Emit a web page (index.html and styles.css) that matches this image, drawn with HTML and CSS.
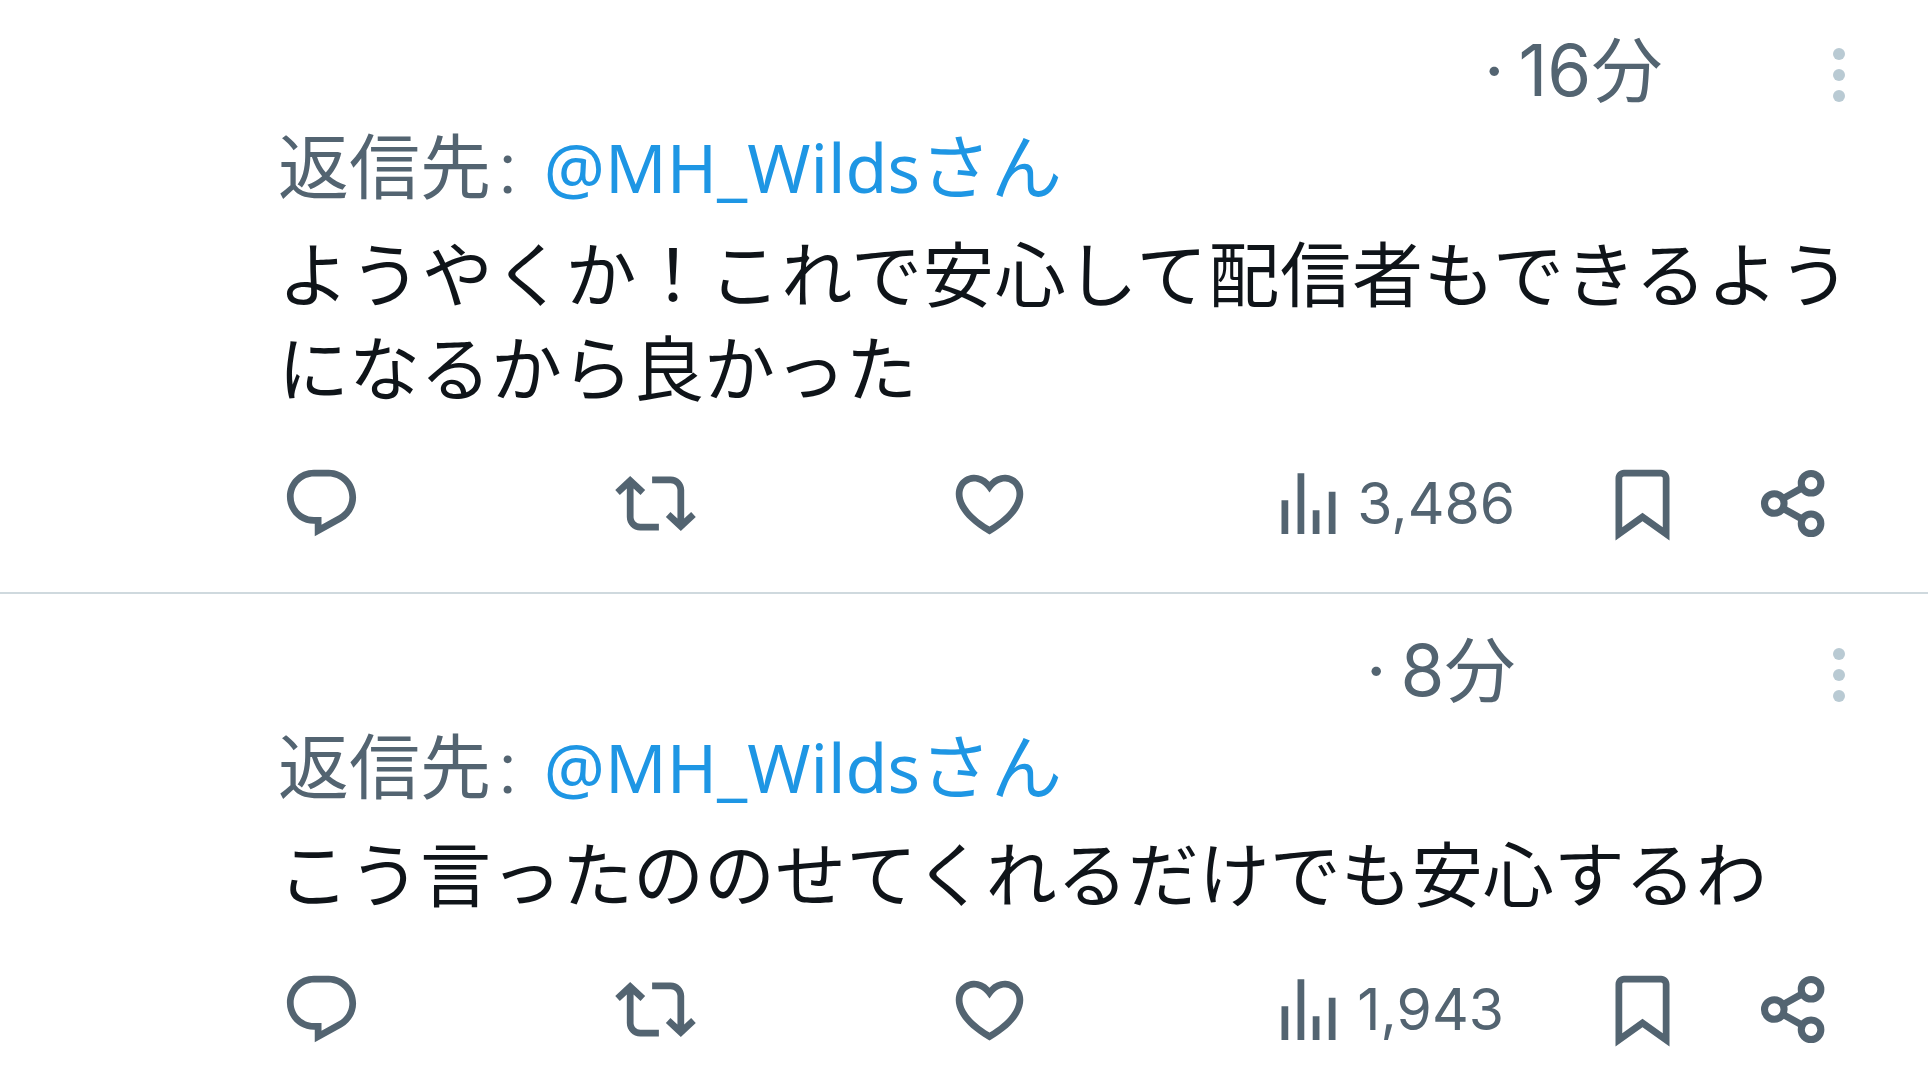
FILE: index.html
```html
<!DOCTYPE html>
<html lang="ja">
<head>
<meta charset="utf-8">
<meta name="viewport" content="width=device-width, initial-scale=1">
<title>返信</title>
<link rel="stylesheet" href="styles.css">
</head>
<body>
<svg class="sprite" aria-hidden="true">
  <symbol id="reply" viewBox="0 0 24 24"><path d="M1.751 10c0-4.42 3.584-8 8.005-8h4.366c4.49 0 8.129 3.64 8.129 8.13 0 2.96-1.607 5.68-4.196 7.11l-8.054 4.46v-3.69h-.067c-4.49.1-8.183-3.51-8.183-8.01zm8.005-6c-3.317 0-6.005 2.69-6.005 6 0 3.37 2.77 6.08 6.138 6.01l.351-.01h1.761v2.3l5.087-2.81c1.951-1.08 3.163-3.13 3.163-5.36 0-3.39-2.744-6.13-6.129-6.13H9.756z"/></symbol>
  <symbol id="repost" viewBox="0 0 24 24"><path d="M4.5 3.88l4.432 4.14-1.364 1.46L5.5 7.55V16c0 1.1.896 2 2 2H13v2H7.5c-2.209 0-4-1.79-4-4V7.55L1.432 9.48.068 8.02 4.5 3.88zM16.5 6H11V4h5.5c2.209 0 4 1.79 4 4v8.45l2.068-1.93 1.364 1.46-4.432 4.14-4.432-4.14 1.364-1.46 2.068 1.93V8c0-1.1-.896-2-2-2z"/></symbol>
  <symbol id="like" viewBox="0 0 24 24"><path d="M16.697 5.5c-1.222-.06-2.679.51-3.89 2.16l-.805 1.09-.806-1.09C9.984 6.01 8.526 5.44 7.304 5.5c-1.243.07-2.349.78-2.91 1.91-.552 1.12-.633 2.78.479 4.82 1.074 1.97 3.257 4.27 7.129 6.61 3.87-2.34 6.052-4.64 7.126-6.61 1.111-2.04 1.03-3.7.477-4.82-.561-1.13-1.666-1.84-2.908-1.91zm4.187 7.69c-1.351 2.48-4.001 5.12-8.379 7.67l-.503.3-.504-.3c-4.379-2.55-7.029-5.19-8.382-7.67-1.36-2.5-1.41-4.86-.514-6.67.887-1.79 2.647-2.91 4.601-3.01 1.651-.09 3.368.56 4.798 2.01 1.429-1.45 3.146-2.1 4.796-2.01 1.954.1 3.714 1.22 4.601 3.01.896 1.81.846 4.17-.514 6.67z"/></symbol>
  <symbol id="views" viewBox="0 0 24 24"><path d="M8.75 21V3h2v18h-2zM18 21V8.5h2V21h-2zM4 21V11h2v10H4zm9.25 0v-7h2v7h-2z"/></symbol>
  <symbol id="bookmark" viewBox="0 0 24 24"><path d="M4 4.5C4 3.12 5.119 2 6.5 2h11C18.881 2 20 3.12 20 4.5v18.44l-8-5.71-8 5.71V4.5zM6.5 4c-.276 0-.5.22-.5.5v14.56l6-4.29 6 4.29V4.5c0-.28-.224-.5-.5-.5h-11z"/></symbol>
  <symbol id="share" viewBox="0 0 24 24"><g fill="none" stroke="currentColor" stroke-width="2.1"><circle cx="6.6" cy="12" r="2.9"/><circle cx="17.5" cy="6" r="2.9"/><circle cx="17.5" cy="18" r="2.9"/><path d="M9.1 10.6l5.9-3.3M9.1 13.4l5.9 3.3"/></g></symbol>
  <symbol id="more" viewBox="0 0 12 54"><circle cx="6" cy="6" r="6"/><circle cx="6" cy="27" r="6"/><circle cx="6" cy="48" r="6"/></symbol>
</svg>
<main class="timeline">
  <article class="post">
    <header class="post-head">
      <span class="author author-long"></span>
      <span class="time"><span class="dot">·</span>16分</span>
      <button class="more" type="button" aria-label="もっと見る"><svg><use href="#more"/></svg></button>
    </header>
    <p class="reply-to">返信先<span class="colon">:</span> <a href="#"><span class="handle">@MH_Wilds</span>さん</a></p>
    <p class="text">ようやくか！これで安心して配信者もできるようになるから良かった</p>
    <div class="actions">
      <button class="action" type="button" aria-label="返信"><svg><use href="#reply"/></svg></button>
      <button class="action" type="button" aria-label="リポスト"><svg><use href="#repost"/></svg></button>
      <button class="action" type="button" aria-label="いいね"><svg><use href="#like"/></svg></button>
      <button class="action" type="button" aria-label="表示回数"><svg><use href="#views"/></svg><span>3,486</span></button>
      <button class="action" type="button" aria-label="ブックマーク"><svg><use href="#bookmark"/></svg></button>
      <button class="action" type="button" aria-label="共有"><svg><use href="#share"/></svg></button>
    </div>
  </article>
  <article class="post">
    <header class="post-head">
      <span class="author author-short"></span>
      <span class="time"><span class="dot">·</span>8分</span>
      <button class="more" type="button" aria-label="もっと見る"><svg><use href="#more"/></svg></button>
    </header>
    <p class="reply-to">返信先<span class="colon">:</span> <a href="#"><span class="handle">@MH_Wilds</span>さん</a></p>
    <p class="text">こう言ったののせてくれるだけでも安心するわ</p>
    <div class="actions">
      <button class="action" type="button" aria-label="返信"><svg><use href="#reply"/></svg></button>
      <button class="action" type="button" aria-label="リポスト"><svg><use href="#repost"/></svg></button>
      <button class="action" type="button" aria-label="いいね"><svg><use href="#like"/></svg></button>
      <button class="action" type="button" aria-label="表示回数"><svg><use href="#views"/></svg><span>1,943</span></button>
      <button class="action" type="button" aria-label="ブックマーク"><svg><use href="#bookmark"/></svg></button>
      <button class="action" type="button" aria-label="共有"><svg><use href="#share"/></svg></button>
    </div>
  </article>
</main>
</body>
</html>
```
FILE: styles.css
```css
* {
  box-sizing: border-box;
}

body {
  margin: 0;
  background: #fff;
  color: #0f1419;
  font-family: Roboto, "Noto Sans CJK JP", sans-serif;
  font-size: 71px;
  line-height: 94px;
}

button {
  padding: 0;
  border: 0;
  background: none;
  color: inherit;
  font: inherit;
}

svg {
  display: block;
  fill: currentColor;
}

.sprite {
  display: none;
}

.post {
  padding: 28px 70px 48px 278px;
}

.post + .post {
  padding-top: 34px;
  border-top: 2px solid #cfd9de;
}

.post-head {
  display: flex;
  align-items: center;
  height: 94px;
}

.author-long {
  flex: 0 1 1206px;
}

.author-short {
  flex: 0 1 1088px;
}

.time {
  align-self: flex-start;
  color: #536471;
  font-family: Inter, "Noto Sans CJK JP", sans-serif;
  line-height: 84px;
  white-space: nowrap;
}

.dot {
  padding-right: 14px;
}

.more {
  margin-left: auto;
  padding: 0 13px;
  color: #b9cad3;
}

.more svg {
  width: 12px;
  height: 54px;
}

.reply-to,
.text {
  margin: 0;
}

.reply-to {
  color: #536471;
}

.reply-to a {
  color: #1e96e4;
  text-decoration: none;
}

.handle {
  font-family: "Noto Sans", sans-serif;
  font-size: 68px;
  line-height: 1;
}

.colon {
  padding: 0 10px 0 8px;
}

.text {
  margin: 14px 0 45px;
  padding-right: 8px;
  text-align: justify;
}

.actions {
  display: grid;
  grid-template-columns: 334fr 334fr 320fr 334fr 150fr 81px;
  padding: 0 25px 0 3px;
  color: #536471;
}

.action {
  display: flex;
  align-items: center;
  gap: 8px;
  height: 81px;
  font-family: Inter, sans-serif;
  font-size: 57px;
}

.action svg {
  width: 81px;
  height: 81px;
}
```
